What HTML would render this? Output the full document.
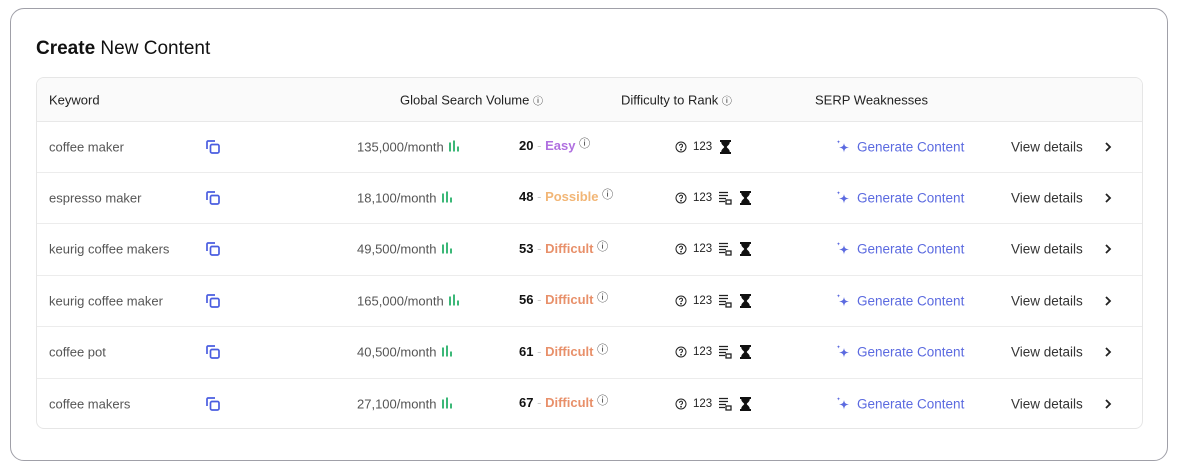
<!DOCTYPE html><html><head><style>
body{margin:0;width:1192px;height:476px;background:#fff;font-family:"Liberation Sans",sans-serif;position:relative;overflow:hidden;color:#333}
.card{position:absolute;left:10px;top:8px;width:1158px;height:453px;border:1px solid #a0a0a8;border-radius:14px;box-sizing:border-box}
h1{position:absolute;left:36px;top:38px;margin:0;font-size:19px;font-weight:normal;color:#111}
.tbl{position:absolute;left:36px;top:77px;width:1107px;height:352px;border:1px solid #e6e6e6;border-radius:8px;box-sizing:border-box;overflow:hidden}
.hd{position:absolute;left:0;top:0;width:100%;height:43px;background:#fafafa;border-bottom:1px solid #e8e8e8;font-size:13px;color:#222}
.row{position:absolute;left:0;width:100%;height:51px;border-bottom:1px solid #ececec;font-size:13px}
.a{position:absolute;top:50%;transform:translateY(-50%);white-space:nowrap}
.g{color:#5b6ae0;font-size:13.5px}
svg{display:block}
.il{display:inline-block;vertical-align:-1px;margin-left:4px}
</style></head><body>
<div class="card"></div>
<h1><b>Create</b> New Content</h1>
<div class="tbl">
<div class="hd">
<span class="a" style="left:12px">Keyword</span>
<span class="a" style="left:363px">Global Search Volume <span style="font-size:10px">ⓘ</span></span>
<span class="a" style="left:584px">Difficulty to Rank <span style="font-size:10px">ⓘ</span></span>
<span class="a" style="left:778px">SERP Weaknesses</span>
</div>
<div id="rows"></div>
</div>
<script>
var d=[["coffee maker","135,000",20,"Easy","#b070e0",0],["espresso maker","18,100",48,"Possible","#f2b676",1],["keurig coffee makers","49,500",53,"Difficult","#e8906a",1],["keurig coffee maker","165,000",56,"Difficult","#e8906a",1],["coffee pot","40,500",61,"Difficult","#e8906a",1],["coffee makers","27,100",67,"Difficult","#e8906a",1]];
var h="";
var copy='<svg width="16" height="16" viewBox="0 0 16 16" fill="none" stroke="#4a5de0" stroke-width="1.7"><path d="M2 10V3a1 1 0 0 1 1-1h7"/><rect x="5.5" y="5.5" width="8.5" height="8.5" rx="1.5"/></svg>';
var bars='<svg class="il" width="12" height="12" viewBox="0 0 12 12" fill="#3cb878"><rect x="1" y="2" width="2" height="9"/><rect x="5" y="0" width="2" height="11"/><rect x="9" y="6" width="2" height="5"/></svg>';
var hg='<svg width="11" height="14" viewBox="0 0 11 14"><path d="M0 0h11v2h-1.2c0 3-3 4-3 5s3 2 3 5H11v2H0v-2h1.2c0-3 3-4 3-5S1.2 5 1.2 2H0z" fill="#111"/></svg>';
var doc='<svg width="14" height="14" viewBox="0 0 14 14" fill="none" stroke="#222" stroke-width="1.3"><path d="M1 1.5h9M1 4.5h9M1 7.5h7M1 10.5h6"/><rect x="8" y="9" width="5" height="4" fill="#fff"/></svg>';
var q='<svg width="12" height="12" viewBox="0 0 12 12" fill="none" stroke="#222" stroke-width="1"><circle cx="6" cy="6" r="5"/><path d="M4.5 4.7a1.5 1.5 0 1 1 2 1.4c-.4.2-.5.5-.5.9"/><circle cx="6" cy="8.7" r=".4" fill="#222"/></svg>';
var sp='<svg width="16" height="16" viewBox="0 0 16 16" fill="#5b6ae0"><path d="M9 4c.5 3 1.5 4 5 4.5-3.5.5-4.5 1.5-5 5-.5-3.5-1.5-4.5-5-5 3.5-.5 4.5-1.5 5-4.5z"/><path d="M3.5 1c.2 1.2.6 1.6 1.8 1.8-1.2.2-1.6.6-1.8 1.8-.2-1.2-.6-1.6-1.8-1.8 1.2-.2 1.6-.6 1.8-1.8z"/></svg>';
var chev='<svg width="8" height="10" viewBox="0 0 8 10" fill="none" stroke="#222" stroke-width="1.8"><path d="M2 1l4 4-4 4"/></svg>';
d.forEach(function(r,i){
var t=43+i*51.4;
h+='<div class="row" style="top:'+t+'px"><span class="a" style="left:12px;color:#555">'+r[0]+'</span>'+
'<span class="a" style="left:168px">'+copy+'</span>'+
'<span class="a" style="left:320px;color:#555">'+r[1]+'/month'+bars+'</span>'+
'<span class="a" style="left:482px;top:45%"><b style="color:#111">'+r[2]+'</b> <span style="color:#ccc">-</span> <b style="color:'+r[4]+'">'+r[3]+'</b> <span style="font-size:11px;vertical-align:3px">ⓘ</span></span>'+
'<span class="a" style="left:638px">'+q+'</span><span class="a" style="left:656px;font-size:11.5px;color:#222">123</span>'+
(r[5]?'<span class="a" style="left:681px">'+doc+'</span><span class="a" style="left:703px">'+hg+'</span>':'<span class="a" style="left:683px">'+hg+'</span>')+
'<span class="a" style="left:798px">'+sp+'</span><span class="a g" style="left:820px">Generate Content</span>'+
'<span class="a" style="left:974px;color:#333;font-size:13.5px">View details</span><span class="a" style="left:1067px">'+chev+'</span></div>';
});
document.getElementById("rows").innerHTML=h;
</script>
</body></html>
